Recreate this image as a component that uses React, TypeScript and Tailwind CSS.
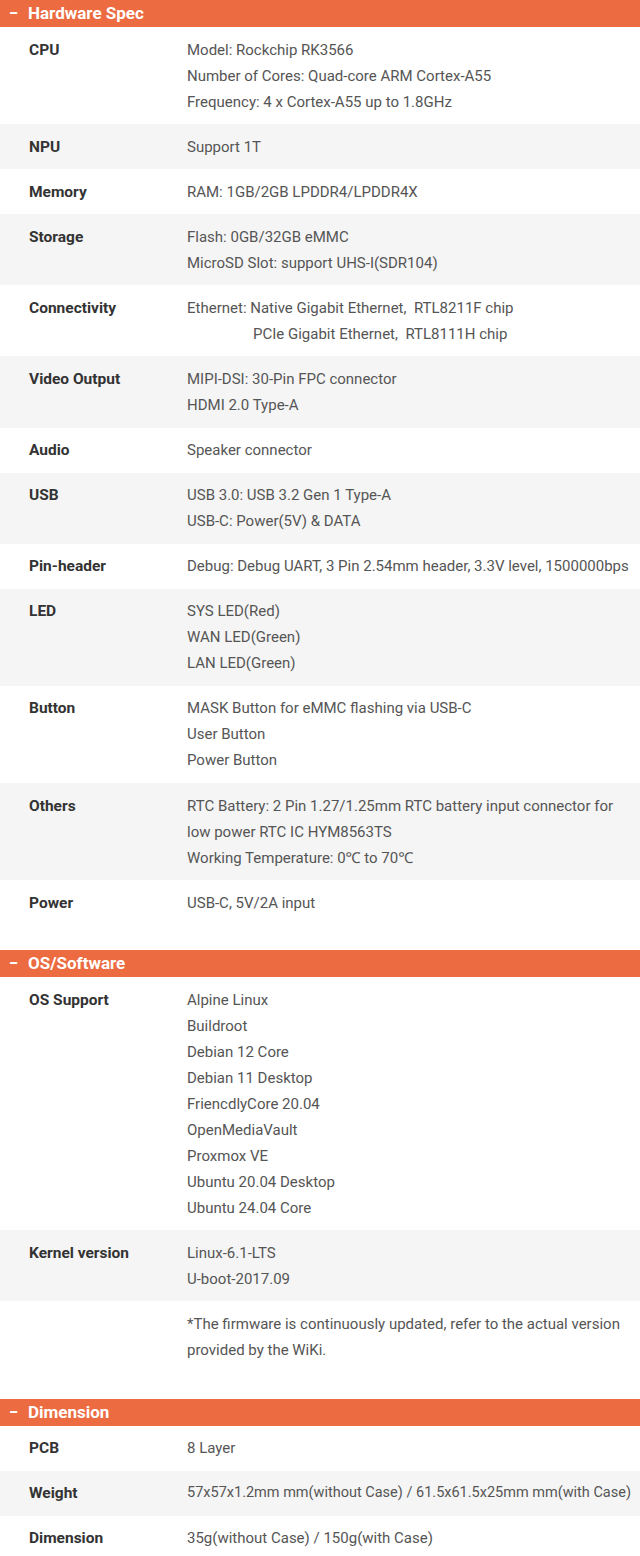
/**
 * SpecSheet — collapsible-looking spec tables for a single-board computer.
 */

type Row = { label: string; lines: string[]; indent?: number[]; tight?: boolean };

const hardware: Row[] = [
  {
    label: 'CPU',
    lines: [
      'Model: Rockchip RK3566',
      'Number of Cores: Quad-core ARM Cortex-A55',
      'Frequency: 4 x Cortex-A55 up to 1.8GHz',
    ],
  },
  { label: 'NPU', lines: ['Support 1T'] },
  { label: 'Memory', lines: ['RAM: 1GB/2GB LPDDR4/LPDDR4X'] },
  { label: 'Storage', lines: ['Flash: 0GB/32GB eMMC', 'MicroSD Slot: support UHS-I(SDR104)'] },
  {
    label: 'Connectivity',
    lines: ['Ethernet: Native Gigabit Ethernet,  RTL8211F chip', 'PCIe Gigabit Ethernet,  RTL8111H chip'],
    indent: [1],
  },
  { label: 'Video Output', lines: ['MIPI-DSI: 30-Pin FPC connector', 'HDMI 2.0 Type-A'] },
  { label: 'Audio', lines: ['Speaker connector'] },
  { label: 'USB', lines: ['USB 3.0: USB 3.2 Gen 1 Type-A', 'USB-C: Power(5V) & DATA'] },
  { label: 'Pin-header', lines: ['Debug: Debug UART, 3 Pin 2.54mm header, 3.3V level, 1500000bps'] },
  { label: 'LED', lines: ['SYS LED(Red)', 'WAN LED(Green)', 'LAN LED(Green)'] },
  { label: 'Button', lines: ['MASK Button for eMMC flashing via USB-C', 'User Button', 'Power Button'] },
  {
    label: 'Others',
    lines: [
      'RTC Battery: 2 Pin 1.27/1.25mm RTC battery input connector for',
      'low power RTC IC HYM8563TS',
      'Working Temperature: 0℃ to 70℃',
    ],
  },
  { label: 'Power', lines: ['USB-C, 5V/2A input'] },
];

const software: Row[] = [
  {
    label: 'OS Support',
    lines: [
      'Alpine Linux',
      'Buildroot',
      'Debian 12 Core',
      'Debian 11 Desktop',
      'FriencdlyCore 20.04',
      'OpenMediaVault',
      'Proxmox VE',
      'Ubuntu 20.04 Desktop',
      'Ubuntu 24.04 Core',
    ],
  },
  { label: 'Kernel version', lines: ['Linux-6.1-LTS', 'U-boot-2017.09'] },
  {
    label: '',
    lines: [
      '*The firmware is continuously updated, refer to the actual version',
      'provided by the WiKi.',
    ],
  },
];

const dimension: Row[] = [
  { label: 'PCB', lines: ['8 Layer'] },
  {
    label: 'Weight',
    lines: ['57x57x1.2mm mm(without Case) / 61.5x61.5x25mm mm(with Case)'],
    tight: true,
  },
  { label: 'Dimension', lines: ['35g(without Case) / 150g(with Case)'] },
];

function SectionHeader({ title }: { title: string }) {
  return (
    <div className="h-[27px] bg-[#ec6b41] flex items-center pl-[9px] text-white font-bold text-[17px] leading-none">
      <span className="w-[19px]">−</span>
      <span>{title}</span>
    </div>
  );
}

function SpecTable({ rows }: { rows: Row[] }) {
  return (
    <div>
      {rows.map((row, i) => (
        <div
          key={i}
          className={`grid grid-cols-[158px_1fr] pl-[29px] pr-2 py-[9.55px] ${i % 2 === 1 ? 'bg-[#f5f5f5]' : 'bg-white'}`}
        >
          <div className="font-bold text-[#333] text-[15.5px] leading-[26px]">{row.label}</div>
          <div className={`text-[#555] leading-[26px] ${row.tight ? 'text-[14.5px]' : 'text-[15px]'}`}>
            {row.lines.map((line, j) => (
              <div
                key={j}
                className={`whitespace-pre ${row.indent?.includes(j) ? 'pl-[66px]' : ''}`}
              >
                {line}
              </div>
            ))}
          </div>
        </div>
      ))}
    </div>
  );
}

export default function App() {
  return (
    <div className="w-[640px] bg-white font-['Roboto','Noto_Sans',sans-serif] overflow-hidden h-[1556px]">
      <SectionHeader title="Hardware Spec" />
      <SpecTable rows={hardware} />
      <div className="h-[25px]" />
      <SectionHeader title="OS/Software" />
      <SpecTable rows={software} />
      <div className="h-[26px]" />
      <SectionHeader title="Dimension" />
      <SpecTable rows={dimension} />
    </div>
  );
}
